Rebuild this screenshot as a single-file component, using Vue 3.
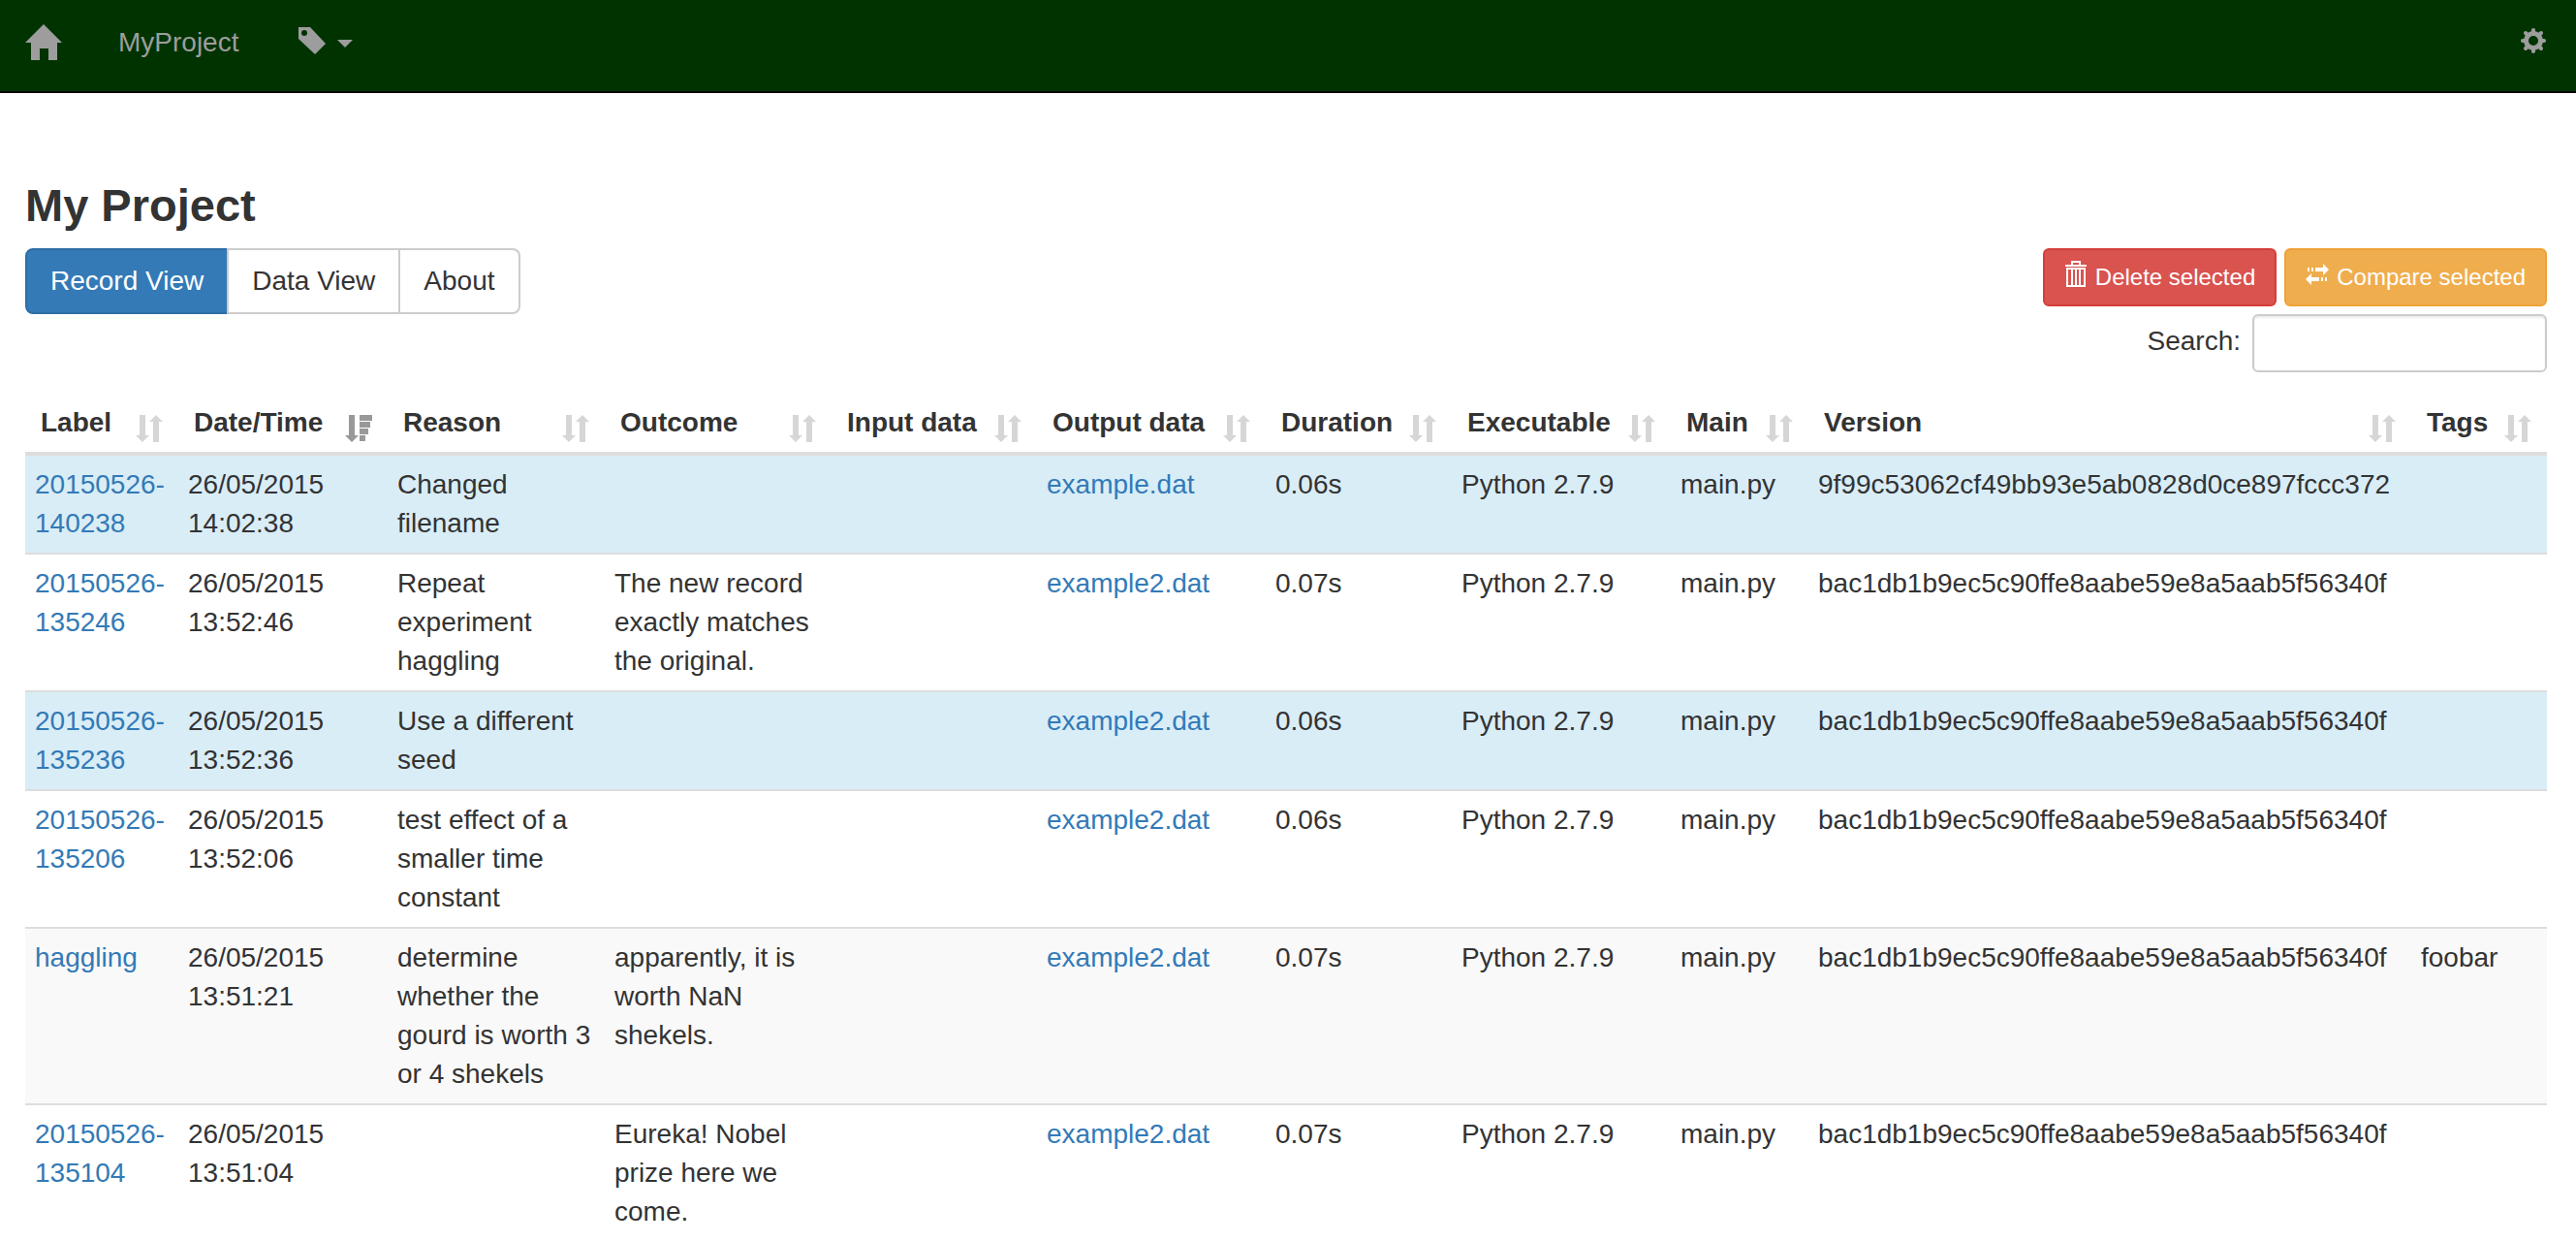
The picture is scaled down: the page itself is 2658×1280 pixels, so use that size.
<script setup>
import { ref } from 'vue'

const search = ref('')

const columns = [
  { title: 'Label', width: 158 },
  { title: 'Date/Time', width: 216, sorted: true },
  { title: 'Reason', width: 224 },
  { title: 'Outcome', width: 234 },
  { title: 'Input data', width: 212 },
  { title: 'Output data', width: 236 },
  { title: 'Duration', width: 192 },
  { title: 'Executable', width: 226 },
  { title: 'Main', width: 142 },
  { title: 'Version', width: 622 },
  { title: 'Tags', width: 140 }
]

const hash = 'bac1db1b9ec5c90ffe8aabe59e8a5aab5f56340f'

const records = [
  { label: '20150526-140238', date: '26/05/2015 14:02:38', reason: 'Changed filename', outcome: '', output: 'example.dat', duration: '0.06s', version: '9f99c53062cf49bb93e5ab0828d0ce897fccc372', tags: '', state: 'selected' },
  { label: '20150526-135246', date: '26/05/2015 13:52:46', reason: 'Repeat experiment haggling', outcome: 'The new record exactly matches the original.', output: 'example2.dat', duration: '0.07s', version: hash, tags: '', state: '' },
  { label: '20150526-135236', date: '26/05/2015 13:52:36', reason: 'Use a different seed', outcome: '', output: 'example2.dat', duration: '0.06s', version: hash, tags: '', state: 'selected' },
  { label: '20150526-135206', date: '26/05/2015 13:52:06', reason: 'test effect of a smaller time constant', outcome: '', output: 'example2.dat', duration: '0.06s', version: hash, tags: '', state: '' },
  { label: 'haggling', date: '26/05/2015 13:51:21', reason: 'determine whether the gourd is worth 3 or 4 shekels', outcome: 'apparently, it is worth NaN shekels.', output: 'example2.dat', duration: '0.07s', version: hash, tags: 'foobar', state: 'striped' },
  { label: '20150526-135104', date: '26/05/2015 13:51:04', reason: '', outcome: 'Eureka! Nobel prize here we come.', output: 'example2.dat', duration: '0.07s', version: hash, tags: '', state: '' }
]
</script>

<template>
  <div class="page">
    <nav class="navbar">
      <a class="home" href="#" aria-label="Home">
        <svg width="38" height="38" viewBox="0 0 38 38"><path d="M19 1 38 20H33V38H24V26H15V38H6V20H0Z" /></svg>
      </a>
      <a class="project" href="#">MyProject</a>
      <button class="tag-menu" type="button" aria-label="Tags">
        <svg width="28" height="28" viewBox="0 0 28 28"><path fill-rule="evenodd" d="M0 0H12L28 17 17 28 0 12ZM6 3A3 3 0 1 0 6 9 3 3 0 1 0 6 3Z" /></svg>
        <svg class="caret" width="16" height="8" viewBox="0 0 16 8"><path d="M0 0H16L8 8Z" /></svg>
      </button>
      <button class="settings" type="button" aria-label="Settings">
        <svg width="28" height="28" viewBox="0 0 28 28">
          <g fill="none" stroke="currentColor">
            <circle cx="14" cy="14" r="7.500" stroke-width="5" />
            <path stroke-width="4" stroke-linecap="round" d="M14 5V3M14 23V25M5 14H3M23 14H25M8 8 6 6M20 8 22 6M8 20 6 22M20 20 22 22" />
          </g>
        </svg>
      </button>
    </nav>

    <main class="content">
      <h3>My Project</h3>
      <div class="toolbar">
        <div class="views">
          <button class="view active" type="button">Record View</button>
          <button class="view" type="button">Data View</button>
          <button class="view" type="button">About</button>
        </div>
        <div class="tools">
          <div class="actions">
            <button class="action danger" type="button">
              <svg width="24" height="28" viewBox="0 0 24 28">
                <path fill="none" stroke="currentColor" stroke-width="2" d="M1 6H23M8 5V2H16V5M3 9H21V27H3ZM8 9V26M12 9V26M16 9V26" />
              </svg>
              Delete selected
            </button>
            <button class="action warning" type="button">
              <svg width="24" height="28" viewBox="0 0 24 28">
                <path d="M2 8H4V12H2ZM6 8H8V12H6ZM10 8H18V4L24 10 18 16V12H10ZM0 20 6 14V18H14V22H6V26ZM16 18H18V22H16ZM20 18H22V22H20Z" />
              </svg>
              Compare selected
            </button>
          </div>
          <div class="search">
            <label for="search">Search:</label>
            <input id="search" v-model="search" type="search" />
          </div>
        </div>
      </div>

      <table>
        <colgroup>
          <col v-for="c in columns" :key="c.title" :style="{ width: c.width + 'px' }" />
        </colgroup>
        <thead>
          <tr>
            <th v-for="c in columns" :key="c.title" scope="col">
              <button class="sort" :class="{ sorted: c.sorted }" type="button">
                {{ c.title }}
                <svg v-if="c.sorted" width="28" height="28" viewBox="0 0 28 28">
                  <path d="M4 0H10V21H14L7 28 0 21H4ZM15 0H28V6H15ZM15 7H26V13H15ZM15 14H24V20H15ZM15 21H21V27H15Z" />
                </svg>
                <svg v-else width="28" height="28" viewBox="0 0 28 28">
                  <path d="M4 0H10V21H14L7 28 0 21H4ZM18 28V7H14L21 0 28 7H24V28Z" />
                </svg>
              </button>
            </th>
          </tr>
        </thead>
        <tbody>
          <tr v-for="r in records" :key="r.label" :class="r.state">
            <td><a href="#">{{ r.label }}</a></td>
            <td>{{ r.date }}</td>
            <td>{{ r.reason }}</td>
            <td>{{ r.outcome }}</td>
            <td></td>
            <td><a href="#">{{ r.output }}</a></td>
            <td>{{ r.duration }}</td>
            <td>Python 2.7.9</td>
            <td>main.py</td>
            <td>{{ r.version }}</td>
            <td>{{ r.tags }}</td>
          </tr>
        </tbody>
      </table>
    </main>
  </div>
</template>

<style>
body {
  background: #fff;
}
</style>

<style scoped>
.page {
  font-family: "Liberation Sans", Arial, sans-serif;
  font-size: 28px;
  line-height: 40px;
  color: #333;
}
.page * {
  box-sizing: border-box;
}
button,
input {
  margin: 0;
  font: inherit;
  color: inherit;
}
svg {
  display: block;
  flex: none;
  fill: currentColor;
}
a {
  color: #337ab7;
  text-decoration: none;
}
.navbar {
  display: flex;
  align-items: flex-start;
  height: 96px;
  padding: 24px 30px 0 26px;
  background: #003300;
  border-bottom: 2px solid #080808;
  color: #9d9d9d;
}
.navbar a {
  color: inherit;
}
.project {
  margin-left: 58px;
}
.navbar button {
  display: flex;
  align-items: center;
  padding: 4px 0 0;
  background: none;
  border: 0;
}
.navbar .tag-menu {
  margin-left: 62px;
  gap: 12px;
}
.caret {
  margin-top: 6px;
}
.navbar .settings {
  margin-left: auto;
}
.content {
  padding: 90px 30px 0 26px;
}
h3 {
  margin: 0 0 18px;
  font-size: 47px;
  font-weight: 700;
  line-height: 52px;
}
.toolbar {
  display: flex;
  justify-content: space-between;
  align-items: flex-start;
}
.views {
  display: flex;
}
.view {
  padding: 12px 24px;
  background: #fff;
  border: 2px solid #ccc;
}
.view + .view {
  margin-left: -2px;
}
.view:first-child {
  border-radius: 8px 0 0 8px;
}
.view:last-child {
  border-radius: 0 8px 8px 0;
}
.view.active {
  background: #337ab7;
  border-color: #2e6da4;
  color: #fff;
}
.tools {
  display: flex;
  flex-direction: column;
  align-items: flex-end;
  gap: 8px;
}
.actions {
  display: flex;
  gap: 8px;
}
.action {
  display: flex;
  gap: 8px;
  padding: 10px 20px;
  border: 2px solid;
  border-radius: 6px;
  font-size: 24px;
  line-height: 36px;
  color: #fff;
}
.danger {
  background: #d9534f;
  border-color: #d43f3a;
}
.warning {
  background: #f0ad4e;
  border-color: #eea236;
}
.search {
  display: flex;
  gap: 12px;
}
.search label {
  padding-top: 8px;
}
.search input {
  width: 304px;
  height: 60px;
  padding: 10px 20px;
  background: #fff;
  border: 2px solid #ccc;
  border-radius: 6px;
  box-shadow: inset 0 2px 2px rgba(0, 0, 0, 0.08);
  appearance: none;
}
table {
  width: 100%;
  margin-top: 22px;
  table-layout: fixed;
  border-collapse: separate;
  border-spacing: 0;
}
th {
  padding: 10px 16px;
  border-bottom: 4px solid #ddd;
}
.sort {
  display: flex;
  justify-content: space-between;
  align-items: flex-end;
  width: 100%;
  padding: 0;
  background: none;
  border: 0;
  font-weight: 700;
  white-space: nowrap;
}
.sort svg {
  color: #d6d6d6;
}
.sort.sorted svg {
  color: #999;
}
td {
  padding: 10px;
  border-bottom: 2px solid #ddd;
  vertical-align: top;
}
.selected td {
  background: #d9edf7;
}
.striped td {
  background: #f9f9f9;
}
</style>
